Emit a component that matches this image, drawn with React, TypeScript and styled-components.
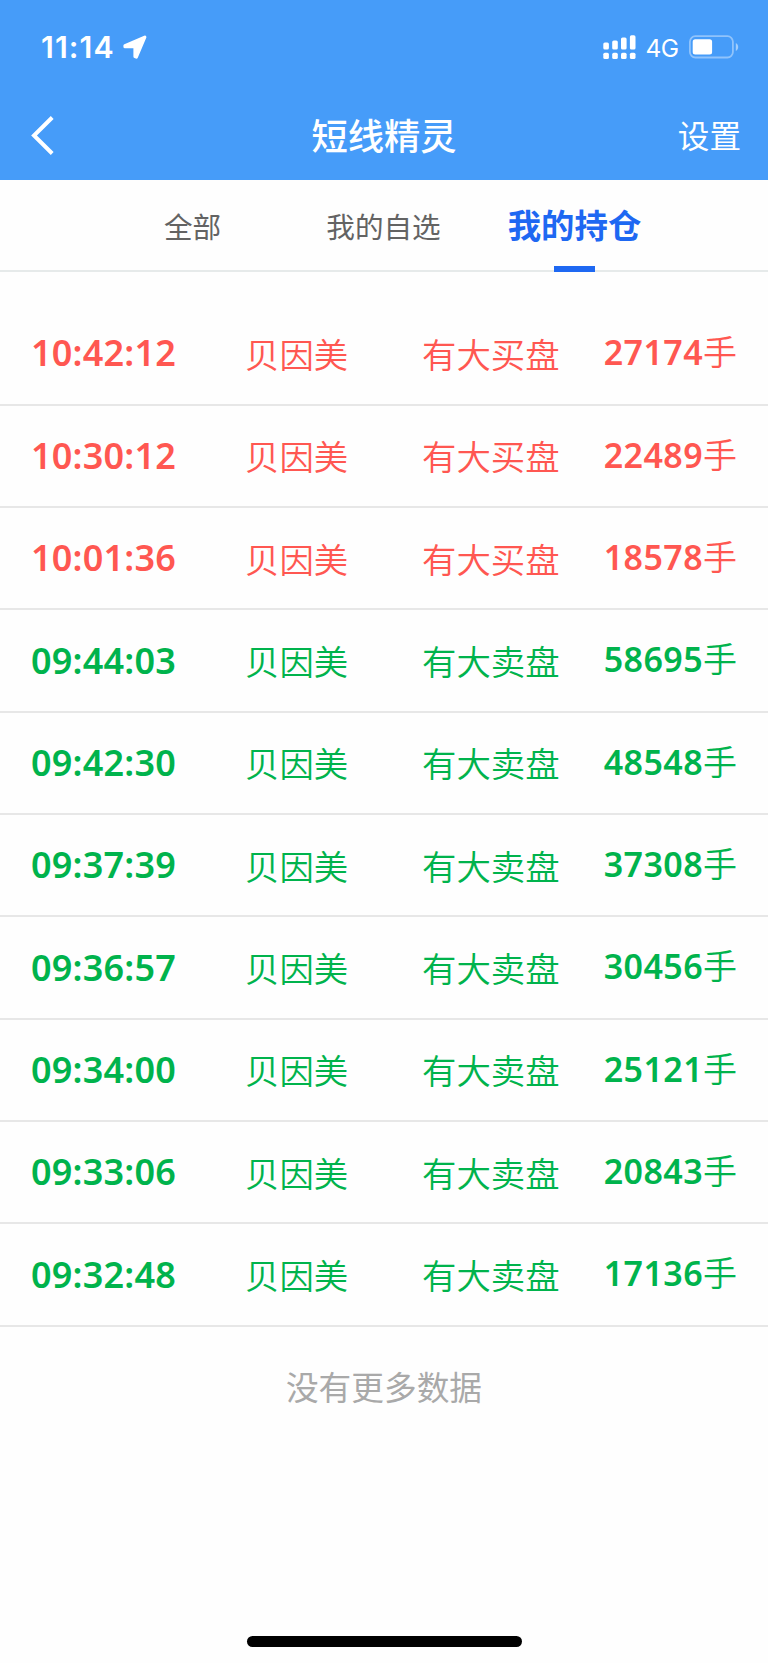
import React from 'react';
import styled, { createGlobalStyle } from 'styled-components';

const GlobalStyle = createGlobalStyle`
  * { box-sizing: border-box; }
  body {
    margin: 0;
    background: #fefefe;
    font-family: 'Noto Sans CJK SC', sans-serif;
  }
`;

const Screen = styled.div`
  width: 768px;
  height: 1663px;
  display: flex;
  flex-direction: column;
  background: #fefefe;
  overflow: hidden;
`;

const Header = styled.header`
  flex: none;
  height: 180.3px;
  background: #469cf9;
  color: #fff;
`;

const StatusBar = styled.div`
  height: 94px;
  padding: 0 29.5px 0 41px;
  display: flex;
  align-items: center;
`;

const Clock = styled.span`
  font: 600 30.3px/36px Inter, sans-serif;
  letter-spacing: 1.1px;
  width: 81px;
`;

const StatusIcons = styled.div`
  margin-left: auto;
  display: flex;
  align-items: center;
`;

const Network = styled.span`
  font: 400 24.5px/30px Inter, sans-serif;
  width: 43px;
  margin-left: 10px;
  padding-top: 2px;
  letter-spacing: -0.5px;
`;

const NavBar = styled.div`
  height: 83px;
  padding: 0 27px 0 30.5px;
  display: grid;
  grid-template-columns: 100px 1fr 103.5px;
  align-items: center;
`;

const Title = styled.h1`
  margin: 0;
  padding-bottom: 3px;
  text-align: center;
  font-size: 36.3px;
  line-height: 52px;
  font-weight: 500;
`;

const SettingsLink = styled.span`
  padding-bottom: 3px;
  text-align: right;
  font-size: 31.6px;
  line-height: 46px;
`;

const Tabs = styled.nav`
  flex: none;
  height: 92px;
  padding: 0 98px 0 97px;
  display: grid;
  grid-template-columns: repeat(3, 1fr);
  border-bottom: 2px solid #e6eaea;
`;

const Tab = styled.div<{ $active?: boolean }>`
  position: relative;
  display: flex;
  justify-content: center;
  align-items: center;
  height: 92px;
  padding-bottom: ${(p) => (p.$active ? 5 : 1)}px;
  color: ${(p) => (p.$active ? '#1e68f2' : '#636363')};
  font-size: ${(p) => (p.$active ? 33.4 : 28.6)}px;
  font-weight: ${(p) => (p.$active ? 700 : 400)};

  &::after {
    content: '';
    display: ${(p) => (p.$active ? 'block' : 'none')};
    position: absolute;
    bottom: 0;
    width: 41px;
    height: 6px;
    background: #1e68f2;
  }
`;

const List = styled.main`
  flex: none;
  padding-top: 31px;
`;

const Row = styled.div<{ $side: 'buy' | 'sell' }>`
  height: 102.35px;
  padding: 0 31px;
  display: grid;
  grid-template-columns: 214px 177px 1fr 140px;
  align-items: center;
  border-bottom: 2px solid #e7e7e7;
  color: ${(p) => (p.$side === 'buy' ? '#ff5751' : '#00b34c')};
  font-size: 34.4px;
  line-height: 50px;
  white-space: nowrap;
`;

const Time = styled.span`
  font-family: 'Noto Sans', sans-serif;
  font-size: 36px;
  font-weight: 600;
  letter-spacing: 0.2px;
`;

const Label = styled.span`
  font-weight: 350;
  padding-bottom: 1px;
`;

const Volume = styled.span`
  display: flex;
  justify-content: flex-end;
  align-items: baseline;
  font-size: 34px;
  font-weight: 350;
  padding-bottom: 3.5px;
`;

const Amount = styled.span`
  font-family: 'Noto Sans', sans-serif;
  font-weight: 600;
  font-size: 34px;
  letter-spacing: 0.4px;
`;

const EndNote = styled.p`
  margin: 34px 0 0;
  text-align: center;
  font-size: 32.7px;
  line-height: 50px;
  color: #a9a9a9;
`;

const HomeIndicator = styled.div`
  margin: auto auto 16px;
  width: 275px;
  height: 11px;
  border-radius: 6px;
  background: #000;
`;

const LocationArrow = () => (
  <svg width="26" height="26" viewBox="0 0 26 26">
    <path
      d="M3 11.600 22.800 3.200 14.300 23 13 22.500V12.700H3Z"
      fill="#fff"
      stroke="#fff"
      strokeWidth="3.200"
      strokeLinejoin="round"
    />
  </svg>
);

const Signal = () => (
  <svg width="33" height="25" viewBox="0 0 33 25" fill="#fff">
    <rect x="0.3" y="7.5" width="5.6" height="7" rx="1.6" />
    <rect x="9.2" y="5.5" width="5.6" height="9" rx="1.6" />
    <rect x="18" y="2.5" width="5.6" height="12" rx="1.6" />
    <rect x="26.9" y="0.3" width="5.6" height="14.2" rx="1.6" />
    <rect x="0.3" y="17.7" width="5.6" height="6.3" rx="1.6" />
    <rect x="9.2" y="17.7" width="5.6" height="6.3" rx="1.6" />
    <rect x="18" y="17.7" width="5.6" height="6.3" rx="1.6" />
    <rect x="26.9" y="17.7" width="5.6" height="6.3" rx="1.6" />
  </svg>
);

const Battery = () => (
  <svg width="50" height="24" viewBox="0 0 50 24">
    <rect x="0.9" y="1.2" width="43" height="21.3" rx="5.5" fill="none" stroke="#fff" strokeOpacity="0.4" strokeWidth="1.8" />
    <rect x="3.7" y="4.3" width="19.4" height="15.3" rx="2.5" fill="#fff" />
    <path d="M46.8 8c3.2 1.4 3.2 6.6 0 8Z" fill="#fff" fillOpacity="0.5" />
  </svg>
);

const BackChevron = () => (
  <svg width="24" height="42" viewBox="0 0 24 42">
    <path d="M21.2 2.500 3 20.500l18.200 18" fill="none" stroke="#fff" strokeWidth="4" />
  </svg>
);

const trades: [string, 'buy' | 'sell', string][] = [
  ['10:42:12', 'buy', '27174'],
  ['10:30:12', 'buy', '22489'],
  ['10:01:36', 'buy', '18578'],
  ['09:44:03', 'sell', '58695'],
  ['09:42:30', 'sell', '48548'],
  ['09:37:39', 'sell', '37308'],
  ['09:36:57', 'sell', '30456'],
  ['09:34:00', 'sell', '25121'],
  ['09:33:06', 'sell', '20843'],
  ['09:32:48', 'sell', '17136'],
];

export default function App() {
  return (
    <Screen>
      <GlobalStyle />
      <Header>
        <StatusBar>
          <Clock>11:14</Clock>
          <LocationArrow />
          <StatusIcons>
            <Signal />
            <Network>4G</Network>
            <Battery />
          </StatusIcons>
        </StatusBar>
        <NavBar>
          <BackChevron />
          <Title>短线精灵</Title>
          <SettingsLink>设置</SettingsLink>
        </NavBar>
      </Header>
      <Tabs>
        <Tab>全部</Tab>
        <Tab>我的自选</Tab>
        <Tab $active>我的持仓</Tab>
      </Tabs>
      <List>
        {trades.map(([time, side, amount]) => (
          <Row key={time} $side={side}>
            <Time>{time}</Time>
            <Label>贝因美</Label>
            <Label>{side === 'buy' ? '有大买盘' : '有大卖盘'}</Label>
            <Volume>
              <Amount>{amount}</Amount>手
            </Volume>
          </Row>
        ))}
      </List>
      <EndNote>没有更多数据</EndNote>
      <HomeIndicator />
    </Screen>
  );
}
